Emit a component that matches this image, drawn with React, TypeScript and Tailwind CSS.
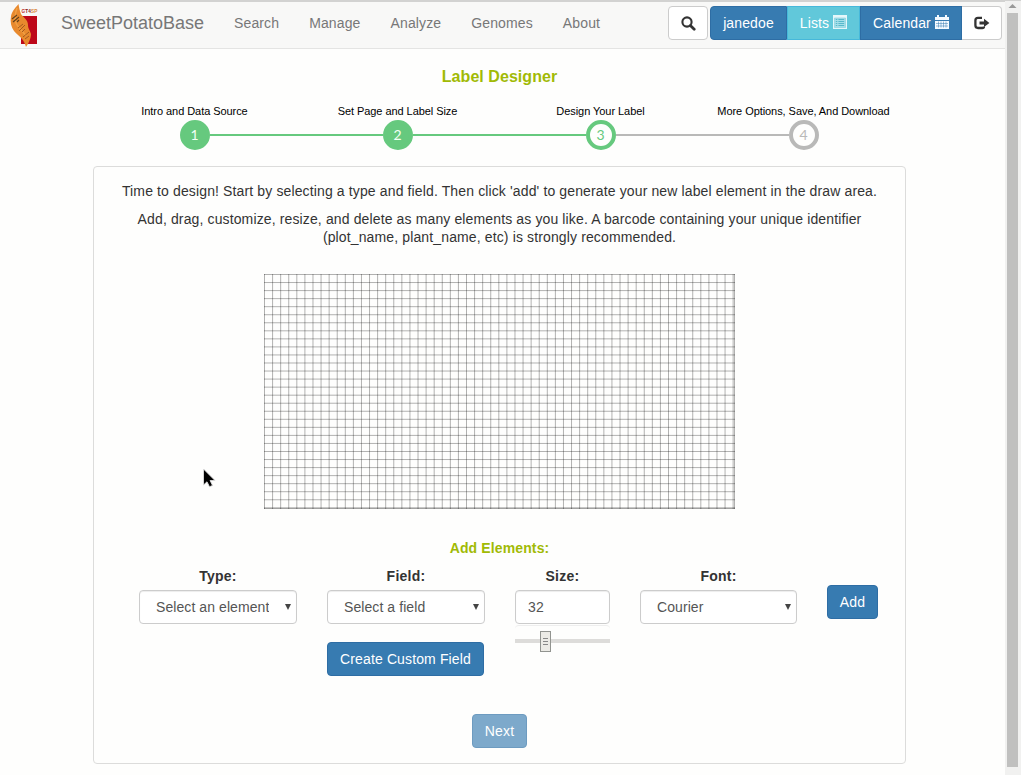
import React from "react";

const COLUMN_PITCH = 8.08;
const ROW_PITCH = 8.045;

function SearchIcon() {
  return (
    <svg width="15" height="15" viewBox="0 0 15 15" fill="none" stroke="#333" className="block">
      <circle cx="6" cy="6" r="4.6" strokeWidth="2.1" />
      <path d="M9.4 9.4 13.2 13.2" strokeWidth="2.8" strokeLinecap="round" />
    </svg>
  );
}

function ListIcon() {
  return (
    <svg width="14" height="14" viewBox="0 0 14 14" className="block">
      <path d="M0 0h14v14H0z" fill="#e4f7fa" />
      <path d="M1.5 3h11v9.5h-11z" fill="#a5dfe9" />
      <path d="M2.8 4.5h1.5M5.4 4.5h5.8M2.8 6.5h1.5M5.4 6.5h5.8M2.8 8.5h1.5M5.4 8.5h5.8M2.8 10.5h1.5M5.4 10.5h5.8" stroke="#57b9cb" strokeWidth="1" />
      <path d="M1.5 3h11v9.5h-11z" fill="none" stroke="#7fcfdd" strokeWidth=".6" />
    </svg>
  );
}

function CalendarIcon() {
  return (
    <svg width="14" height="14" viewBox="0 0 14 14" className="block">
      <path d="M0 2h2V0h2v2h6V0h2v2h2v3H0zM0 6h14v8H0z" fill="#f4faff" />
      <path d="M3.5 6.5v6M6 6.5v6M8.5 6.5v6M11 6.5v6M1 8.5h12M1 11h12" stroke="#377bb1" strokeWidth=".5" fill="none" />
    </svg>
  );
}

function LogoutIcon() {
  return (
    <svg width="16" height="14" viewBox="0 0 16 14" className="block">
      <path d="M8 1.9H4Q1.4 1.9 1.4 4.4V9.3Q1.4 12 4 12H8.3Q10 12 10 10.5" fill="none" stroke="#333" strokeWidth="2.3" />
      <path d="M5.5 5.5H10V2.7L15.4 7 10 11.1V8.4H5.5z" fill="#333" />
    </svg>
  );
}

function Logo() {
  return (
    <svg width="30" height="46" viewBox="0 0 30 46" className="block">
      <path d="M12 14h16v28H12z" fill="#bd0719" />
      <path d="M9.5 2C7 5 3 9 2 14c-1 6 0 11 3 15 2 3 6 5 8 8 2 2 3 5 4 8 2-3 5-8 5-13-1-4-3-5-3-9 0-5-5-8-7-11-1-3-2-6-2.500-10z" fill="#e8892d" />
      <path d="M8 6C6 12 5 16 7 21s7 8 10 13" fill="none" stroke="#f0a045" strokeWidth="1.4" />
      <path d="m3 17 5-4M4 20l6-5M8 20l2-2" stroke="#61401b" strokeWidth="1.1" />
      <path d="m9 26 5-4M10 29l6-6M13 30l3-3M14 35l6-5M16 37l4-3" stroke="#a65a1d" strokeWidth="1" />
      <text x="12.5" y="11" fontFamily="Liberation Sans, sans-serif" fontSize="5.5" fontWeight="bold" textLength="16" lengthAdjust="spacingAndGlyphs" fill="#8e231b">
        <tspan fill="#c22a25">G</tspan>T4<tspan fill="#db8740">SP</tspan>
      </text>
    </svg>
  );
}

type StepProps = { n: number; label: string; state: "done" | "current" | "todo"; left?: string; right?: string };

function Step({ n, label, state, left, right }: StepProps) {
  const circle = {
    done: "border-[#66c97e] bg-[#66c97e] text-[#f2fff5]",
    current: "border-[#66c97e] bg-[#fefefd] text-[#66c97e]",
    todo: "border-[#b9b9b8] bg-[#fefefd] text-[#b9b9b8]",
  }[state];
  return (
    <li className="flex w-[203px] flex-col items-center">
      <span className="h-[18px] text-[11px] leading-[18px] tracking-[-0.06px] whitespace-nowrap text-black">{label}</span>
      <div className="flex w-full items-center">
        <span className={`h-[2px] flex-1 ${left ?? ""}`} />
        <span className={`flex size-[30px] items-center justify-center rounded-full border-4 font-['Lato','Liberation_Sans',sans-serif] text-[14px] leading-none tracking-normal ${circle}`}>{n}</span>
        <span className={`h-[2px] flex-1 ${right ?? ""}`} />
      </div>
    </li>
  );
}

function SelectBox({ value }: { value: string }) {
  return (
    <div className="flex h-[34px] w-full items-center rounded border border-[#ccc] bg-white pr-[5px] pl-4 text-[#555] shadow-[inset_0_1px_1px_rgba(0,0,0,0.075)]">
      <span className="w-[113px] overflow-hidden whitespace-nowrap tracking-[0.08px]">{value}</span>
      <svg width="6" height="6" viewBox="0 0 6 6" className="ml-auto block">
        <path d="M0 0h6L3 6z" fill="#444" />
      </svg>
    </div>
  );
}

function Field({ label, width, children }: { label: string; width: string; children: React.ReactNode }) {
  return (
    <div className={`flex flex-col ${width}`}>
      <div className="mb-1 text-center leading-5 font-bold tracking-[0.25px]">{label}</div>
      {children}
    </div>
  );
}

function DrawArea() {
  const columns = Array.from({ length: 59 }, (_, i) => 0.5 + i * COLUMN_PITCH);
  const rows = Array.from({ length: 30 }, (_, i) => 0.5 + i * ROW_PITCH);
  return (
    <svg width="471" height="235" viewBox="0 0 471 235" className="mx-auto mt-[28px] block">
      <g stroke="#000" strokeOpacity=".3" strokeWidth="1" fill="none">
        {columns.map((x) => <path key={x} d={`M${x} 0V235`} />)}
        {rows.map((y) => <path key={y} d={`M0 ${y}H471`} />)}
        <path d="M470.5 0V235M0 234.5H471" />
      </g>
    </svg>
  );
}

export default function App() {
  return (
    <div className="relative flex h-[775px] w-[1021px] overflow-hidden bg-[#fefefd] font-['Liberation_Sans',Arial,sans-serif] text-[14px] leading-5 tracking-[0.13px] text-[#333]">
      <div className="w-[1005px]">
        <nav className="flex h-[49px] border-b border-[#e4e4e3] bg-[#f8f8f7] pt-[2px] text-[#777] shadow-[inset_0_2px_0_#d2d2d1]">
          <div className="ml-[9px] w-[52px]"><Logo /></div>
          <span className="w-[158px] pt-[11px] text-[18px] leading-5 tracking-normal">SweetPotatoBase</span>
          <div className="flex pt-[11px]">
            {["Search", "Manage", "Analyze", "Genomes", "About"].map((item) => (
              <a key={item} className="px-[15px]">{item}</a>
            ))}
          </div>
          <div className="mt-1 mr-[3px] ml-auto flex h-[34px]">
            <button className="mr-[2px] flex w-10 items-center justify-center rounded border border-[#ccc] bg-white"><SearchIcon /></button>
            <button className="w-[77px] rounded-l border border-[#2e6da4] bg-[#377bb1] text-white">janedoe</button>
            <button className="flex w-[73px] items-center justify-center gap-1 border border-[#46b8da] bg-[#61c8da] text-white">
              Lists <span className="-mt-[3px]"><ListIcon /></span>
            </button>
            <button className="flex w-[102px] items-center justify-center gap-1 border border-[#2e6da4] bg-[#377bb1] text-white">
              Calendar <span className="-mt-[3px]"><CalendarIcon /></span>
            </button>
            <button className="flex w-10 items-center justify-center rounded-r border border-l-0 border-[#ccc] bg-white"><LogoutIcon /></button>
          </div>
        </nav>

        <main className="ml-[93px] w-[813px]">
          <h1 className="pt-[17px] text-center text-[16px] leading-[22px] font-bold tracking-[0.05px] text-[#a1ba05]">Label Designer</h1>
          <ol className="mt-[14px] flex">
            <Step n={1} label="Intro and Data Source" state="done" right="bg-[#66c97e]" />
            <Step n={2} label="Set Page and Label Size" state="done" left="bg-[#66c97e]" right="bg-[#66c97e]" />
            <Step n={3} label="Design Your Label" state="current" left="bg-[#66c97e]" right="bg-[#b9b9b8]" />
            <Step n={4} label="More Options, Save, And Download" state="todo" left="bg-[#b9b9b8]" />
          </ol>

          <section className="mt-4 h-[598px] rounded border border-[#dcdcdb] pt-[14px]">
            <p className="text-center">Time to design! Start by selecting a type and field. Then click 'add' to generate your new label element in the draw area.</p>
            <p className="mt-[9px] text-center leading-[18px]">
              Add, drag, customize, resize, and delete as many elements as you like. A barcode containing your unique identifier
              <br />(plot_name, plant_name, etc) is strongly recommended.
            </p>
            <DrawArea />
            <h2 className="mt-[29px] text-center font-bold text-[#a1ba05]">Add Elements:</h2>
            <div className="mt-2 ml-[45px] flex h-[148px] gap-[30px]">
              <Field label="Type:" width="w-[158px]"><SelectBox value="Select an element" /></Field>
              <Field label="Field:" width="w-[158px]">
                <SelectBox value="Select a field" />
                <button className="mt-[18px] h-[34px] w-[157px] rounded border border-[#2e6da4] bg-[#377bb1] text-white">Create Custom Field</button>
              </Field>
              <Field label="Size:" width="w-[95px]">
                <div className="h-[34px] rounded border border-[#ccc] bg-white px-3 py-[6px] text-[#555] shadow-[inset_0_1px_1px_rgba(0,0,0,0.075)]">32</div>
                <div className="mt-[1px] flex h-[31px] items-center rounded border-t border-[#eee]">
                  <span className="h-1 w-[25px] bg-[#dddcda]" />
                  <span className="flex h-[21px] w-[11px] flex-col items-center justify-center gap-[2px] border border-[#929490] bg-[#ecebe6]">
                    <i className="h-px w-[5px] bg-[#888]" /><i className="h-px w-[5px] bg-[#888]" /><i className="h-px w-[5px] bg-[#888]" />
                  </span>
                  <span className="h-1 flex-1 bg-[#dddcda]" />
                </div>
              </Field>
              <Field label="Font:" width="w-[157px]"><SelectBox value="Courier" /></Field>
              <button className="mt-[19px] h-[34px] w-[51px] rounded border border-[#2e6da4] bg-[#377bb1] text-white">Add</button>
            </div>
            <button className="mx-auto block h-[34px] w-[55px] rounded border border-[#6d9bc0] bg-[#7da9cb] text-white">Next</button>
          </section>
        </main>
      </div>

      <aside className="flex w-4 flex-col items-center bg-[#f1f1f0] shadow-[inset_0_1px_0_#d2d2d1]">
        <svg width="16" height="13" viewBox="0 0 16 13" className="block"><path d="M3.5 8 7.5 4l4 4z" fill="#999" /></svg>
        <div className="mr-[1px] h-[754px] w-[11px] bg-[#c0c0bf]" />
      </aside>

      <svg width="14" height="21" viewBox="0 0 14 21" className="absolute top-[468px] left-[202px]">
        <path d="M1.5 1v16l3.5-3.200 2.500 5 3-1.400-2.400-4.900H13z" fill="#000" stroke="#ddd" strokeWidth=".9" />
      </svg>
    </div>
  );
}
